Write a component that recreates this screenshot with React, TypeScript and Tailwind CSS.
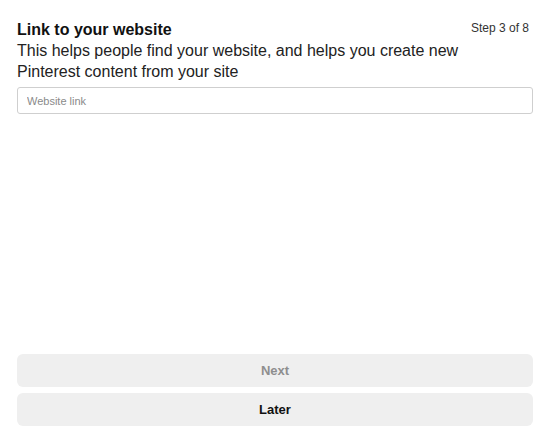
export default function App() {
  return (
    <div className="flex h-[438px] w-[550px] flex-col bg-white px-[17px] pb-[12px] pt-[19px] font-['Liberation_Sans',Arial,sans-serif] text-[#111]">
      <div className="flex items-start justify-between gap-2">
        <div className="min-w-0">
          <h1 className="text-[16px] font-bold leading-[21px]">Link to your website</h1>
          <p className="whitespace-nowrap text-[16px] leading-[21px] text-[#222]">
            This helps people find your website, and helps you create new
            <br />
            Pinterest content from your site
          </p>
        </div>
        <span className="mr-[4px] mt-[1px] shrink-0 whitespace-nowrap text-[12px] leading-[16px] text-[#333]">
          Step 3 of 8
        </span>
      </div>

      <input
        type="text"
        placeholder="Website link"
        className="mt-[5px] h-[27px] w-full rounded-[3px] border border-[#cfcfcf] px-[9px] text-[11px] text-[#333] placeholder:text-[#8a8a8a] outline-none"
      />

      <div className="mt-auto flex flex-col gap-[6px]">
        <button className="h-[33px] w-full rounded-[6px] bg-[#efefef] pt-[1px] text-[13px] font-bold text-[#8e8e8e]">
          Next
        </button>
        <button className="h-[33px] w-full rounded-[6px] bg-[#efefef] pt-[1px] text-[13px] font-bold text-[#111]">
          Later
        </button>
      </div>
    </div>
  );
}
